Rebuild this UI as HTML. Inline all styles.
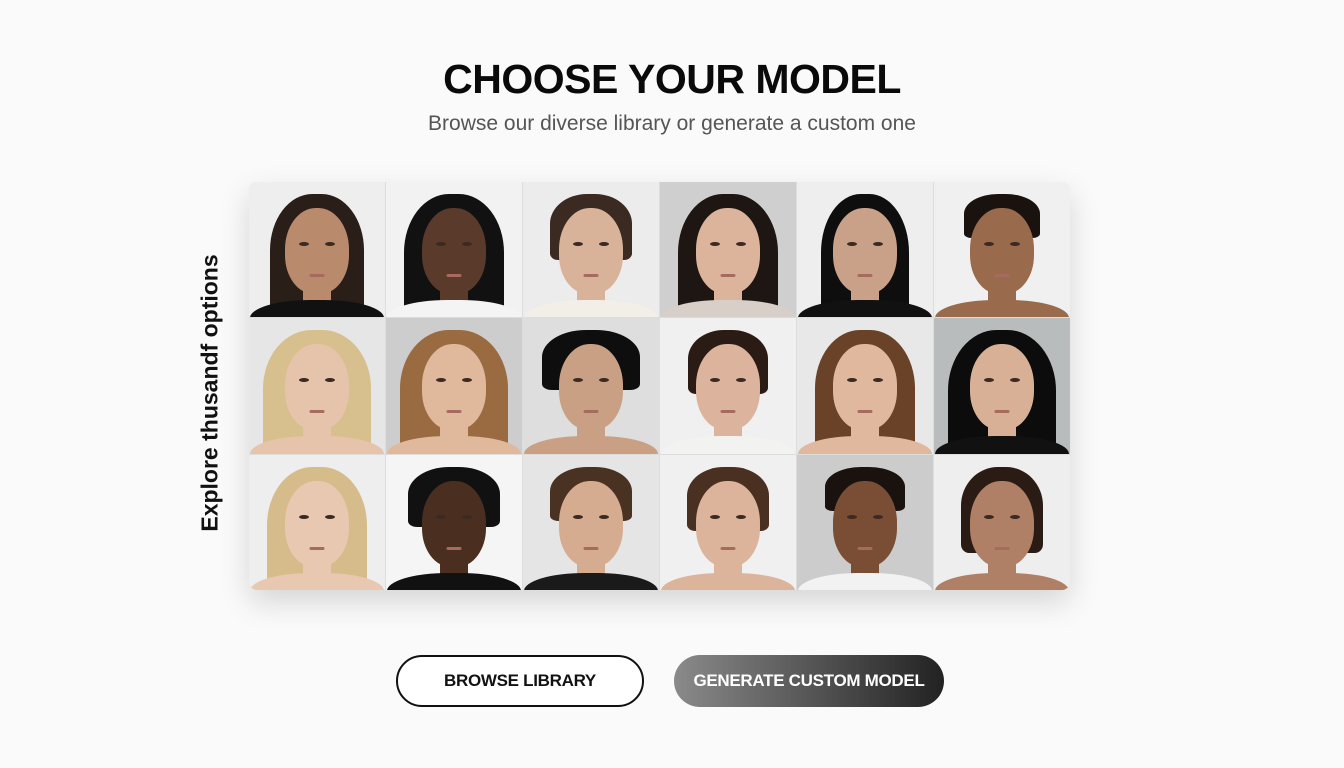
<!DOCTYPE html>
<html><head><meta charset="utf-8"><style>
*{margin:0;padding:0;box-sizing:border-box}
body{width:1344px;height:768px;background:#fafafa;font-family:"Liberation Sans",sans-serif;position:relative;overflow:hidden}
h1{position:absolute;top:56px;left:0;width:1344px;text-align:center;font-size:41px;font-weight:700;color:#0a0a0a;letter-spacing:-0.5px}
.sub{position:absolute;top:112px;left:0;width:1344px;text-align:center;font-size:21px;color:#555}
.side{position:absolute;left:210px;top:393px;transform:translate(-50%,-50%) rotate(-90deg);font-size:23px;font-weight:700;white-space:nowrap;color:#111}
.grid{position:absolute;left:249px;top:182px;width:821px;height:408px;border-radius:8px;overflow:hidden;display:grid;grid-template-columns:repeat(6,1fr);grid-template-rows:repeat(3,1fr);gap:1px;background:#ddd;box-shadow:0 12px 30px rgba(0,0,0,.15)}
.c{position:relative;overflow:hidden}
.c div{position:absolute}
.hair{left:50%;transform:translateX(-50%);top:0;border-radius:45% 45% 10% 10%}
.face{left:50%;transform:translateX(-50%);top:26px;width:64px;height:86px;border-radius:48% 48% 45% 45%}
.neck{left:50%;transform:translateX(-50%);top:100px;width:28px;height:30px}
.sh{left:50%;transform:translateX(-50%);top:118px;width:134px;height:40px;border-radius:45% 45% 0 0}
.eye{top:60px;width:10px;height:4px;background:#3a2a22;border-radius:50%}
.mouth{left:50%;transform:translateX(-50%);top:92px;width:15px;height:3px;background:#a76a5e;border-radius:2px}
.btn{position:absolute;top:655px;height:52px;border-radius:26px;display:flex;align-items:center;justify-content:center;font-size:17px;font-weight:700;letter-spacing:-0.3px}
.b1{left:396px;width:248px;border:2px solid #111;color:#111;background:#fff}
.b2{left:674px;width:270px;background:linear-gradient(90deg,#8a8a8a,#222);color:#fff}
</style></head><body>
<h1>CHOOSE YOUR MODEL</h1>
<div class="sub">Browse our diverse library or generate a custom one</div>
<div class="side">Explore thusandf options</div>
<div class="grid" id="g"></div>
<div class="btn b1">BROWSE LIBRARY</div>
<div class="btn b2">GENERATE CUSTOM MODEL</div>
<script>
var P=[
["#eeeeee","#2a1e18",94,125,"#b98a6c","#111"],
["#f2f2f2","#111",100,130,"#5a3a2a","#f4f4f4"],
["#ececec","#3a2a22",82,66,"#d9b29a","#f2eee8"],
["#cfcfcf","#1e1612",100,130,"#dcb49c","#d8d0c8"],
["#eeeeee","#0e0e0e",88,130,"#c9a088","#111"],
["#f0f0f0","#1a120e",76,44,"#9a6a4c","#9a6a4c"],
["#e6e6e6","#d8bf8e",108,130,"#e6c4ac","#e6c4ac"],
["#cdcdcd","#9a6a40",108,130,"#e0b89c","#e0b89c"],
["#dedede","#0e0e0e",98,60,"#c9a084","#c9a084"],
["#f0f0f0","#2a1c14",80,64,"#dcb49e","#f2f2f0"],
["#e8e8e8","#6a4228",100,130,"#e0b89e","#e0b89e"],
["#b8bcbc","#0c0c0c",108,135,"#d8b096","#111"],
["#eeeeee","#d6bc8a",100,130,"#e8c8b0","#e8c8b0"],
["#f5f5f5","#111",92,60,"#4a2e20","#111"],
["#e5e5e5","#4a3222",82,54,"#d6ac90","#1a1a1a"],
["#f0f0f0","#4a3020",82,64,"#dcb49c","#dcb49c"],
["#cccccc","#1a120e",80,44,"#7a4e34","#f2f2f2"],
["#eeeeee","#2a1c14",82,86,"#b08066","#b08066"]];
var g=document.getElementById('g'),h='';
P.forEach(function(p){h+='<div class="c" style="background:'+p[0]+'"><div class="hair" style="background:'+p[1]+';width:'+p[2]+'px;height:'+p[3]+'px;top:12px"></div><div class="neck" style="background:'+p[4]+'"></div><div class="sh" style="background:'+p[5]+'"></div><div class="face" style="background:'+p[4]+'"></div><div class="eye" style="left:50px"></div><div class="eye" style="left:76px"></div><div class="mouth"></div></div>'});
g.innerHTML=h;
</script>
</body></html>
